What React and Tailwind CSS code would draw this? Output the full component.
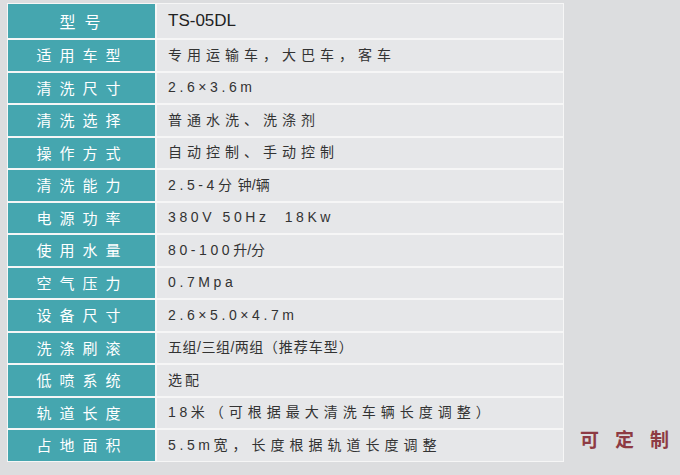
import React from 'react';

// each value is a list of [text, letter-spacing class] runs
const specs = [
    ['适用车型', [['专用运输车，大巴车，客车', 'tracking-[5px]']]],
    ['清洗尺寸', [['2.6×3.6m', 'tracking-[3.6px]']]],
    ['清洗选择', [['普通水洗、洗涤剂', 'tracking-[5px]']]],
    ['操作方式', [['自动控制、手动控制', 'tracking-[5px]']]],
    ['清洗能力', [['2.5-4', 'tracking-[3.6px]'], ['分 ', 'tracking-[1px]'], ['钟/辆', 'tracking-[0px]']]],
    ['电源功率', [['380V 50Hz  18Kw', 'tracking-[3.6px]']]],
    ['使用水量', [['80-100', 'tracking-[3.6px]'], ['升/分', 'tracking-[0px]']]],
    ['空气压力', [['0.7Mpa', 'tracking-[3.6px]']]],
    ['设备尺寸', [['2.6×5.0×4.7m', 'tracking-[3.6px]']]],
    ['洗涤刷滚', [['五组/三组/两组', 'tracking-[0.5px]'], ['（推荐车型）', 'tracking-[1px]']]],
    ['低喷系统', [['选配', 'tracking-[3px]']]],
    ['轨道长度', [['18', 'tracking-[3.6px]'], ['米（可根据最大清洗车辆长度调整）', 'tracking-[5px]']]],
    ['占地面积', [['5.5m', 'tracking-[3.6px]'], ['宽，长度根据轨道长度调整', 'tracking-[5px]']]],
];

const cjk = "font-['Noto_Sans_CJK_SC','Noto_Sans',sans-serif]";
const mixed = "font-['Liberation_Sans','Noto_Sans_CJK_SC',sans-serif]";

const App = () => {
    return (
        <div className={`w-[680px] h-[475px] bg-[#dcdddf] flex ${cjk}`}>
            <div className="ml-[7px] mt-[3px] w-[557px] shrink-0 self-start grid grid-cols-[147px_1fr] gap-[2px] bg-[#f6f6f6] p-[1px]">
                {/* header row */}
                <div className="h-[34px] bg-[#45a6af] flex items-center justify-center text-white text-[16px] tracking-[9px] pl-[6px]">
                    型号
                </div>
                <div className="h-[34px] bg-[#e6e7e9] flex items-center pl-[11px] text-[#222] text-[17px] font-['Liberation_Sans',sans-serif]">
                    TS-05DL
                </div>

                {specs.map(([label, runs]) => (
                    <React.Fragment key={label}>
                        <div className="h-[30.5px] bg-[#45a6af] flex items-center justify-center text-white text-[15px] tracking-[8px] pl-[2px]">
                            {label}
                        </div>
                        <div className={`h-[30.5px] bg-[#e6e7e9] flex items-center pl-[11px] text-[#333] text-[14px] whitespace-pre ${mixed}`}>
                            {runs.map(([t, cls], i) => (
                                <span key={i} className={cls}>{t}</span>
                            ))}
                        </div>
                    </React.Fragment>
                ))}
            </div>

            <div className="flex-1 flex items-end pl-[16px] pb-[23px]">
                <div className="flex gap-[16px] text-[#8e3a43] text-[19px] font-bold leading-none pb-[4px]">
                    <span>可</span>
                    <span>定</span>
                    <span>制</span>
                </div>
            </div>
        </div>
    );
};

export default App;
